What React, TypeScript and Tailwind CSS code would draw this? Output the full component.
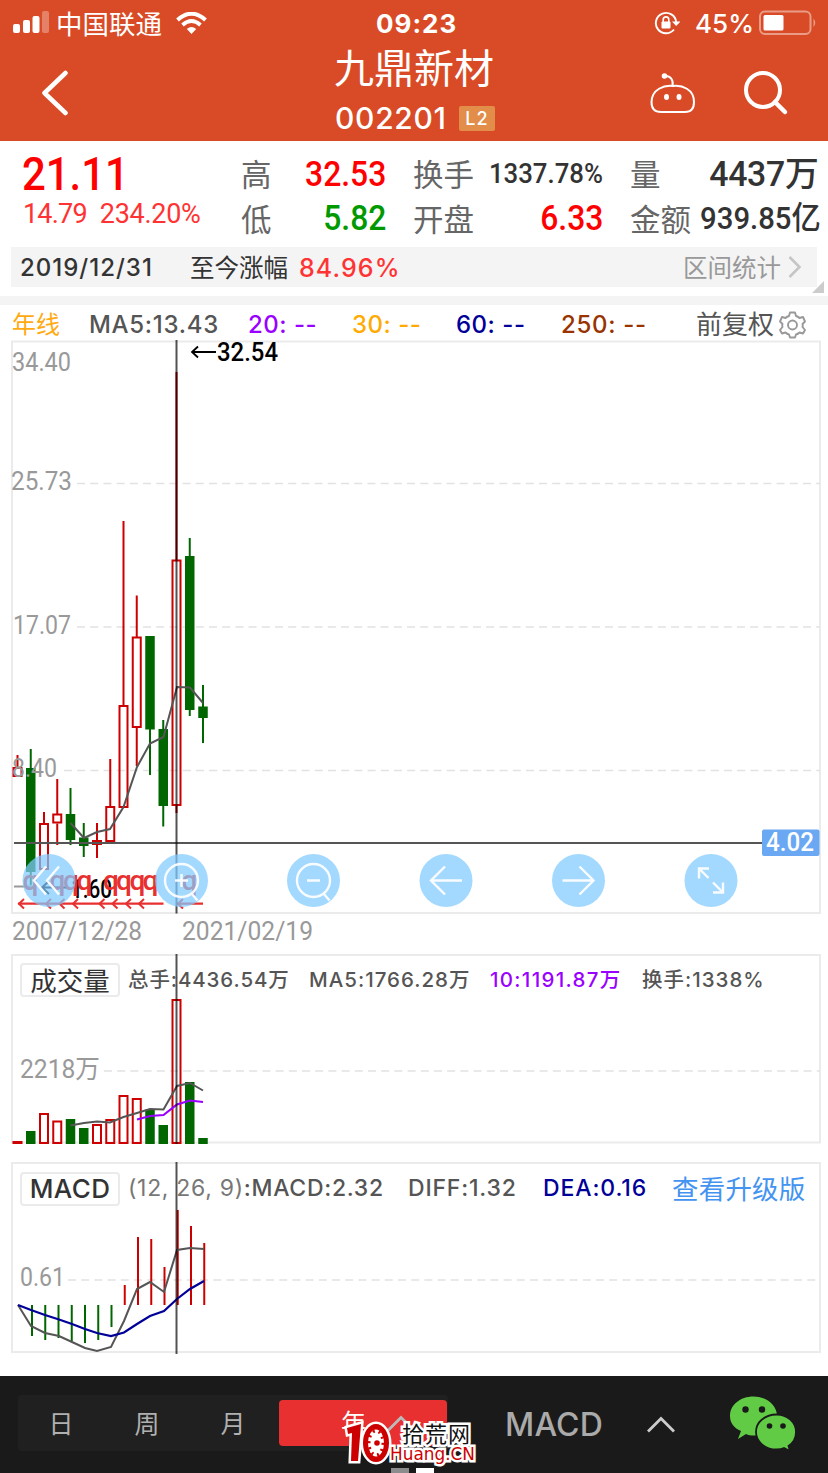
import React from 'react';

type Candle = { up: boolean; high: number; low: number; top: number; bottom: number };

const STEP = 13.25;
const x = (i: number) => 17.5 + STEP * i;
const RED = '#cc0000';
const GREEN = '#006600';

const candles: Candle[] = [
  { up: true, high: 755, low: 777, top: 768, bottom: 777 },
  { up: false, high: 749, low: 885, top: 768, bottom: 872 },
  { up: true, high: 812, low: 870, top: 824, bottom: 870 },
  { up: true, high: 779, low: 845, top: 814.5, bottom: 823.5 },
  { up: false, high: 788, low: 845, top: 814, bottom: 840 },
  { up: false, high: 823, low: 857, top: 837.5, bottom: 846 },
  { up: true, high: 823, low: 858, top: 841, bottom: 845 },
  { up: true, high: 759, low: 844, top: 807, bottom: 842 },
  { up: true, high: 521, low: 807, top: 706, bottom: 808 },
  { up: true, high: 595.5, low: 766, top: 637.5, bottom: 728 },
  { up: false, high: 636, low: 775, top: 636, bottom: 729.5 },
  { up: false, high: 720, low: 826.5, top: 729, bottom: 806 },
  { up: true, high: 372, low: 813, top: 560.5, bottom: 806 },
  { up: false, high: 538, low: 716, top: 556, bottom: 710 },
  { up: false, high: 685, low: 743, top: 706.5, bottom: 718 },
];

const volumes = [1142, 1131, 1114, 1121.5, 1119, 1128, 1125, 1120, 1096, 1099, 1109.5, 1125, 1000, 1082, 1138];
const macd = [1336, 1340, 1338, 1341, 1343, 1340, 1327, 1285, 1237, 1239, 1267, 1210, 1226, 1243];
const signals = [18, 45, 58.5, 72, 98.5, 111.5, 125, 138, 177];

function Grid({ y, from = 12 }: { y: number; from?: number }) {
  return <path d={`M${from} ${y}H820`} stroke="#e2e2e2" strokeWidth="1.5" strokeDasharray="8 5.2" />;
}

function AxisLabel({ at, y, width, size = 26, color = '#999', children }: {
  at: number; y: number; width: number; size?: number; color?: string; children: string;
}) {
  return (
    <text x={at} y={y} fontSize={size} fill={color} textLength={width} lengthAdjust="spacingAndGlyphs"
      className="font-['Roboto','Noto_Sans_CJK_SC',sans-serif]">
      {children}
    </text>
  );
}

function StatusBar() {
  return (
    <div className="flex h-[46px] items-center">
      <div className="flex w-[376px] items-center pl-[13px]">
        <svg width="36" height="24" viewBox="0 0 36 24" fill="#fff">
          <rect x="0" y="13" width="7" height="9" rx="2" />
          <rect x="10" y="9" width="7" height="13" rx="2" />
          <rect x="19.5" y="5" width="7" height="17" rx="2" />
          <rect x="29" y="0" width="7" height="22" rx="2" opacity=".3" />
        </svg>
        <span className="ml-[7px] w-[108px] pt-[3px] text-[26.5px] leading-none">中国联通</span>
        <svg className="ml-[12px]" width="31" height="23" viewBox="0 0 31 23" fill="none" stroke="#fff">
          <path d="M1.5 8Q15.5 -4.5 29.5 8" strokeWidth="4" />
          <path d="M6.5 13Q15.5 5 24.5 13" strokeWidth="3.7" />
          <path d="M10.8 17Q15.5 12.8 20.2 17L15.5 22Z" fill="#fff" stroke="none" />
        </svg>
      </div>
      <span className="w-[278px] pt-px text-[26px] font-bold leading-none tracking-[1px]">09:23</span>
      <svg width="26" height="24" viewBox="0 0 26 24" fill="none" stroke="#fff" strokeWidth="1.9">
        <path d="M20 18.5A10.2 10.2 0 1 1 22.2 11" />
        <path d="M18 10.5H26.5L22.2 15Z" fill="#fff" stroke="none" />
        <rect x="7.5" y="10.5" width="9" height="7" rx="1" fill="#fff" stroke="none" />
        <path d="M9.2 11V8.7A2.8 2.8 0 0 1 14.8 8.7V11" strokeWidth="1.6" />
      </svg>
      <span className="ml-[15px] w-[64px] pt-px text-[26px] font-medium leading-none">45%</span>
      <svg width="58" height="26" viewBox="0 0 58 26">
        <rect x="1" y="1.5" width="50.5" height="22.5" rx="5" fill="none" stroke="#fff" strokeOpacity=".45" strokeWidth="2" />
        <rect x="4.5" y="5" width="20" height="15.5" rx="1.5" fill="#fff" />
        <path d="M54.5 8.5Q58 13 54.5 17Z" fill="#fff" opacity=".45" />
      </svg>
    </div>
  );
}

function Header() {
  return (
    <header className="h-[141px] bg-[#d94b26] text-white">
      <StatusBar />
      <div className="flex h-[95px]">
        <svg className="ml-[42px] mt-6 shrink-0" width="27" height="47" viewBox="0 0 27 47" fill="none" stroke="#fff" strokeWidth="4.5" strokeLinecap="round" strokeLinejoin="round">
          <path d="M23.5 3L2.5 23L23.5 43" />
        </svg>
        <div className="ml-[265px] w-[316px]">
          <h1 className="mt-[3px] text-[40px] leading-[40px]">九鼎新材</h1>
          <div className="mt-[15px] flex items-center">
            <span className="w-[125px] pl-px text-[30px] font-medium leading-[28px] tracking-[0.7px]">002201</span>
            <span className="flex h-[25px] w-[36px] items-center justify-center rounded-[2px] bg-[#e28d49] text-[18px] font-medium tracking-[1px]">L2</span>
          </div>
        </div>
        <svg className="mt-[26px]" width="46" height="42" viewBox="0 0 46 42" fill="none" stroke="#fff" strokeWidth="2">
          <path d="M23 14C14 13 2 17 1.5 30C1.5 36 4 40 11 40H35C42 40 44 36 44 30C44 17 32 13 23 14Z" />
          <path d="M22.500 14C23.500 8 21 4 15 4" />
          <circle cx="14.500" cy="4" r="1.800" fill="#fff" />
          <ellipse cx="16.500" cy="25" rx="2.500" ry="3" fill="#fff" stroke="none" />
          <ellipse cx="29" cy="25" rx="2.500" ry="3" fill="#fff" stroke="none" />
        </svg>
        <svg className="ml-[47px] mt-[24px]" width="46" height="46" viewBox="0 0 46 46" fill="none" stroke="#fff" strokeWidth="4">
          <circle cx="20" cy="20" r="17" />
          <path d="M32 32L42 42" strokeWidth="4.5" strokeLinecap="round" />
        </svg>
      </div>
    </header>
  );
}

function Stat({ label, value, className }: { label: string; value: string; className: string }) {
  return (
    <div className="flex h-[44.5px] items-center justify-between whitespace-nowrap">
      <span className="pt-[2px] text-[30.5px] leading-none text-[#666]">{label}</span>
      <span className={`font-['Roboto','Noto_Sans_CJK_SC',sans-serif] font-medium leading-none ${className}`}>{value}</span>
    </div>
  );
}

function Quote() {
  return (
    <section className="h-[155px]">
      <div className="flex h-[106px] pt-[11px]">
        <div className="w-[241px] pl-[22px] font-['Roboto',sans-serif]">
          <div className="origin-left scale-x-[0.91] text-[46px] font-medium leading-[44px] text-[#f00]">21.11</div>
          <div className="mt-[5px] flex gap-[13px] pl-px text-[27px] leading-[27px] tracking-[-0.8px] text-[#ff3333]">
            <span>14.79</span>
            <span className="tracking-[-0.3px]">234.20%</span>
          </div>
        </div>
        <div className="w-[145px]">
          <Stat label="高" value="32.53" className="origin-right scale-x-[0.91] text-[35px] text-[#f00]" />
          <Stat label="低" value="5.82" className="origin-right scale-x-[0.91] text-[35px] text-[#009900]" />
        </div>
        <div className="ml-[27px] w-[190px]">
          <Stat label="换手" value="1337.78%" className="origin-right scale-x-[0.92] text-[28px] text-[#333]" />
          <Stat label="开盘" value="6.33" className="origin-right scale-x-[0.91] text-[35px] text-[#f00]" />
        </div>
        <div className="ml-[27px] w-[188px]">
          <Stat label="量" value="4437万" className="origin-right scale-x-[0.98] text-[34.5px] tracking-[-0.3px] text-[#333]" />
          <Stat label="金额" value="939.85亿" className="origin-right scale-x-[0.93] text-[31.5px] text-[#333]" />
        </div>
      </div>
      <div className="relative ml-[11px] mr-[11px] flex h-[40px] items-center bg-[#f4f4f4] pl-[9px] text-[24px] leading-none text-[#333]">
        <span className="w-[170px] pt-px font-medium tracking-[1px]">2019/12/31</span>
        <span className="w-[109px] pt-[2px] text-[24.5px]">至今涨幅</span>
        <span className="w-[384px] pt-[2px] text-[25px] font-medium tracking-[1.1px] text-[#ff3333]">84.96%</span>
        <span className="w-[105px] pt-[2px] text-[24.5px] text-[#999]">区间统计</span>
        <svg width="14" height="22" viewBox="0 0 14 22" fill="none" stroke="#c5c5c5" strokeWidth="2.5">
          <path d="M1.500 1L11.500 11L1.500 21" />
        </svg>
        <span className="absolute -bottom-[6px] -right-[7px] size-[12px] bg-[#ccc] [clip-path:polygon(100%_0,100%_100%,0_100%)]" />
      </div>
    </section>
  );
}

function Averages() {
  return (
    <div className="flex h-[35px] items-center whitespace-pre pl-[12px] pt-[4px] text-[24px] font-medium leading-none tracking-[0.7px]">
      <span className="w-[77px] font-normal tracking-normal text-[#ffaa11]">年线</span>
      <span className="w-[159px] text-[#555]">MA5:13.43</span>
      <span className="w-[104px] tracking-[0.5px] text-[#9900ff]">20: --</span>
      <span className="w-[104px] tracking-[0.5px] text-[#ffaa00]">30: --</span>
      <span className="w-[105px] tracking-[0.5px] text-[#000099]">60: --</span>
      <span className="w-[135px] text-[#993300]">250: --</span>
      <span className="w-[83px] text-[26px] font-normal tracking-normal text-[#555]">前复权</span>
      <svg width="27" height="28" viewBox="0 0 27 28" fill="none" stroke="#999" strokeWidth="1.9" strokeLinejoin="round">
        <path d="M11 1.5H16L17 5Q19 5.5 20.5 7L24 6L26 10.5L23.5 13Q24 15 23.5 16L26 19L24 22.5L20.5 21.5Q19 23 17 23.5L16 26.5H11L10 23.5Q8 23 6.5 21.500L3 22.5L1 19L3.5 16Q3 14 3.5 13L1 10.5L3 6L6.5 7Q8 5.5 10 5Z" />
        <circle cx="13.5" cy="14" r="4.5" />
      </svg>
    </div>
  );
}

function ChartTools() {
  const centers = [49, 181.5, 313.5, 446, 578.5, 711];
  const icons = [
    'M-3 -14L-15 0L-3 14M10 -14L-2 0L10 14',
    'M16.5 0A16.5 16.5 0 1 1 -16.5 0A16.5 16.5 0 1 1 16.5 0M-6.5 0H6.5M0 -6.5V6.5M10 13L16 20',
    'M16.5 0A16.5 16.5 0 1 1 -16.5 0A16.5 16.5 0 1 1 16.5 0M-6.5 0H6.5M10 13L16 20',
    'M16 0H-15M-1 -14L-15 0L-1 14',
    'M-16 0H15M1 -14L15 0L1 14',
    'M-2.5 -2.5L-12 -12M-12 -2V-12H-2M2 2L12 12M12 2V12H2',
  ];
  return (
    <g>
      {centers.map((cx, i) => (
        <g key={cx} transform={`translate(${cx} 880.5)`}>
          <circle r="26.5" fill="#81cbff" opacity=".72" />
          <path d={icons[i]} fill="none" stroke="#fff" strokeWidth="2.4" opacity=".92" />
        </g>
      ))}
    </g>
  );
}

function PriceChart() {
  return (
    <svg className="block" width="828" height="610" viewBox="0 340 828 610" fill="none">
      <rect x="12" y="341.5" width="808" height="571.5" stroke="#ebebeb" strokeWidth="2" />
      <Grid y={483.5} from={77} />
      <Grid y={627} from={77} />
      <Grid y={770.5} from={64} />
      {candles.map((c, i) => (
        <g key={i} stroke={c.up ? RED : GREEN} strokeWidth="2">
          <path d={c.up ? `M${x(i)} ${c.high}V${c.top}M${x(i)} ${c.bottom}V${c.low}` : `M${x(i)} ${c.high}V${c.low}`} />
          {c.up
            ? <rect x={x(i) - 4} y={c.top} width="8" height={c.bottom - c.top - 1} />
            : <rect x={x(i) - 4.75} y={c.top} width="9.5" height={c.bottom - c.top} fill={GREEN} stroke="none" />}
        </g>
      ))}
      <path d="M70.5 823L84 838L97 832L110 829L123.5 807L137 767L150 743.5L163.5 737L177 687L190 687.5L203 703" stroke="#555" strokeWidth="2" />
      <AxisLabel at={12} y={370.5} width={59}>34.40</AxisLabel>
      <AxisLabel at={11} y={490} width={61}>25.73</AxisLabel>
      <AxisLabel at={13} y={633.5} width={58}>17.07</AxisLabel>
      <AxisLabel at={12} y={776.5} width={45}>8.40</AxisLabel>
      <path d="M216 352H192M198 346.5L192 352L198 357.5" stroke="#000" strokeWidth="1.8" />
      <g className="font-medium">
        <AxisLabel at={217} y={361} width={61} size={25} color="#000">32.54</AxisLabel>
        <AxisLabel at={71} y={897.5} width={41} size={25} color="#000">1.60</AxisLabel>
      </g>
      <path d="M14 886.5H35" stroke="#999" strokeWidth="2" />
      <path d="M68 887.5H42M49 881L42 887.5L49 894" stroke="#000" strokeWidth="2" />
      <g fill="#e83030" fontSize="28" className="font-['Roboto',sans-serif] font-medium">
        {signals.map((s) => <text key={s} x={s + 4.5} y={890}>q</text>)}
      </g>
      <path d="M18 903.7H163.5M177 903.7H203" stroke="#e83030" strokeWidth="2.2" />
      {signals.map((s) => (
        <path key={s} d={`M${s + 6} 899L${s + 1} 903.7L${s + 6} 908.5`} stroke="#e83030" strokeWidth="2" />
      ))}
      <path d="M14 843H763" stroke="#555" strokeWidth="2" />
      <path d="M176.5 340V913.5" stroke="#000" strokeOpacity=".68" strokeWidth="2" />
      <rect x="762" y="829.5" width="57.5" height="26.5" rx="2" fill="#6ba8f3" />
      <g className="font-medium">
        <AxisLabel at={766} y={851} width={48} size={26} color="#fff">4.02</AxisLabel>
      </g>
      <ChartTools />
      <AxisLabel at={12} y={940} width={130} size={25}>2007/12/28</AxisLabel>
      <AxisLabel at={182} y={940} width={131} size={25}>2021/02/19</AxisLabel>
    </svg>
  );
}

function VolumeChart() {
  return (
    <section className="relative h-[208px] pt-[13px]">
      <div className="flex h-[34px] items-center pl-[20px] text-[20.5px] font-medium leading-none tracking-[0.9px] text-[#555]">
        <span className="flex h-[34px] w-[100px] items-center justify-center rounded-[4px] border-2 border-[#ebebeb] pt-[2px] text-[26.5px] font-normal tracking-normal text-[#333]">成交量</span>
        <span className="ml-[8px] w-[181px]">总手:4436.54万</span>
        <span className="w-[181px] tracking-[1px]">MA5:1766.28万</span>
        <span className="w-[152px] tracking-[1.3px] text-[#9900ff]">10:1191.87万</span>
        <span className="tracking-[1px]">换手:1338%</span>
      </div>
      <svg className="absolute inset-0" width="828" height="208" viewBox="0 950 828 208" fill="none">
        <rect x="12" y="955" width="808" height="187.5" stroke="#ebebeb" strokeWidth="2" />
        <Grid y={1071} from={104} />
        <AxisLabel at={20} y={1077.5} width={80}>2218万</AxisLabel>
        {volumes.map((top, i) => (
          candles[i].up
            ? <rect key={i} x={x(i) - 4} y={top} width="8" height={1143 - top} stroke={RED} strokeWidth="2" />
            : <rect key={i} x={x(i) - 4.75} y={top} width="9.5" height={1144 - top} fill={GREEN} />
        ))}
        <path d="M70.5 1125.5L84 1123L97 1121.5L110 1122.5L123.5 1117L137 1113L150 1109L163.5 1109.5L177 1086L190 1083L203 1090.5" stroke="#555" strokeWidth="2" />
        <path d="M137 1119.5L150 1116L163.5 1115L177 1104.5L190 1100.5L203 1102" stroke="#9900ff" strokeWidth="2.2" />
        <path d="M176.5 954V1144" stroke="#000" strokeOpacity=".68" strokeWidth="2" />
      </svg>
    </section>
  );
}

function MacdChart() {
  return (
    <section className="relative h-[218px] pt-[13px]">
      <div className="flex h-[35px] items-center whitespace-pre pl-[20px] text-[23px] font-medium leading-none tracking-[0.7px] text-[#555]">
        <span className="flex h-[34px] w-[100px] items-center justify-center rounded-[4px] border-2 border-[#ebebeb] text-[26px] tracking-[0.4px] text-[#333]">MACD</span>
        <span className="ml-[8px] w-[280px]"><span className="font-normal text-[#777]">(12, 26, 9)</span>:MACD:2.32</span>
        <span className="w-[135px] tracking-[0.8px]">DIFF:1.32</span>
        <span className="w-[129px] tracking-[0.9px] text-[#000099]">DEA:0.16</span>
        <span className="pt-[2px] text-[26.5px] font-normal tracking-[0.2px] text-[#4393f0]">查看升级版</span>
      </div>
      <svg className="absolute inset-0" width="828" height="218" viewBox="0 1158 828 218" fill="none">
        <rect x="12" y="1163" width="808" height="189" stroke="#ebebeb" strokeWidth="2" />
        <Grid y={1280} from={68} />
        <AxisLabel at={20} y={1286} width={45} size={25}>0.61</AxisLabel>
        {macd.map((y, i) => (
          <path key={i} d={`M${32 + STEP * i} 1305V${y}`} stroke={y < 1305 ? RED : GREEN} strokeWidth="2" />
        ))}
        <path d="M18 1305L31 1326L45 1333L59 1336L72 1342L85 1348L97 1351L111 1347L124 1321L137 1289L150 1282L164 1292L177 1250L190 1248L204 1249" stroke="#555" strokeWidth="2" />
        <path d="M18 1305L31 1310L45 1315L59 1319.5L72 1324L85 1329L97 1333L111 1336L124 1332.5L137 1324L150 1316L164 1311L177 1299L190 1289L204 1281" stroke="#000099" strokeWidth="2.2" />
        <path d="M176.5 1162V1354" stroke="#000" strokeOpacity=".68" strokeWidth="2" />
      </svg>
    </section>
  );
}

function Watermark() {
  return (
    <svg className="absolute left-[340px] top-[40px]" width="140" height="57" viewBox="340 1416 140 57">
      <rect x="391" y="1468" width="18" height="5" fill="#8c8c8e" />
      <rect x="416" y="1468" width="18" height="5" fill="#fff" />
      <g stroke="#fff" strokeWidth="5" strokeLinejoin="miter" paintOrder="stroke">
        <path d="M347 1428L361 1424L358 1461H351L352 1433L348 1434Z" fill="#cc0000" />
        <ellipse cx="376" cy="1443" rx="13" ry="19" fill="#cc0000" />
        <text x="402" y="1442" fontSize="22" fill="#111" textLength="68" className="font-['Noto_Sans_CJK_SC',sans-serif]">拾荒网</text>
        <text x="390" y="1459.5" fontSize="18" fill="#cc0000" textLength="85" lengthAdjust="spacingAndGlyphs" className="font-['DejaVu_Sans',sans-serif]">Huang.CN</text>
      </g>
      <ellipse cx="376" cy="1443" rx="8" ry="13.5" fill="#fff" />
      <ellipse cx="376" cy="1443" rx="7" ry="12" fill="none" stroke="#cc0000" strokeWidth="3" strokeDasharray="2 4" />
      <circle cx="377" cy="1443" r="2.8" fill="#cc0000" />
    </svg>
  );
}

function Chevron({ className, color }: { className?: string; color: string }) {
  return (
    <svg className={className} width="28" height="17" viewBox="0 0 28 17" fill="none" stroke={color} strokeWidth="2.8">
      <path d="M1 15.5L14 2.5L27 15.5" />
    </svg>
  );
}

function BottomBar() {
  return (
    <footer className="relative flex h-[97px] bg-[#1a1a1a] pt-[19px]">
      <div className="ml-[18px] flex h-[56px] w-[430px] items-center rounded-[4px] bg-[#202020] text-[25px] leading-none text-[#b0b0b0]">
        <span className="w-[86px] pt-[2px] text-center">日</span>
        <span className="w-[86px] pt-[2px] text-center">周</span>
        <span className="w-[86px] pt-[2px] text-center">月</span>
        <span className="ml-[3px] mb-px flex h-[46px] w-[168px] items-center rounded-[4px] bg-[#e83030] pl-[62px] pt-[2px] text-white">
          年
          <Chevron className="ml-[21px]" color="#bbb" />
        </span>
      </div>
      <div className="ml-[57px] flex h-[59px] items-center text-[32px] font-medium leading-none text-[#aaa]">
        <span className="w-[142px] pt-px tracking-[0.2px]">MACD</span>
        <Chevron color="#ccc" />
      </div>
      <svg className="ml-[54px] mt-[1px]" width="68" height="56" viewBox="729 1396 68 56">
        <path d="M738 1439L741 1431C734 1428 730 1423 730 1416C730 1405 740 1396.5 753.5 1396.5C766 1396.5 777 1405 777 1416C777 1427 767 1435.5 754 1435.5C751 1435.5 748 1435 746 1434Z" fill="#61cb46" />
        <path d="M790 1451L788.5 1446C793 1443 796 1438.5 796 1432C796 1422 787.5 1414.5 776.5 1414.5C765 1414.5 756 1422 756 1432C756 1441.5 765 1449.5 776.5 1449.5C779 1449.5 782 1449 784 1448Z" fill="#61cb46" stroke="#1a1a1a" strokeWidth="1.8" />
        <g fill="#1a1a1a">
          <circle cx="745.5" cy="1409.5" r="3.2" />
          <circle cx="762" cy="1409.5" r="3.2" />
          <circle cx="769.5" cy="1426" r="2.8" />
          <circle cx="783" cy="1426" r="2.8" />
        </g>
      </svg>
      <Watermark />
    </footer>
  );
}

export default function App() {
  return (
    <main className="h-[1473px] w-[828px] overflow-hidden bg-white font-['Inter','Noto_Sans_CJK_SC',sans-serif]">
      <Header />
      <Quote />
      <div className="h-[9px] bg-[#f4f4f4]" />
      <Averages />
      <PriceChart />
      <VolumeChart />
      <MacdChart />
      <BottomBar />
    </main>
  );
}
